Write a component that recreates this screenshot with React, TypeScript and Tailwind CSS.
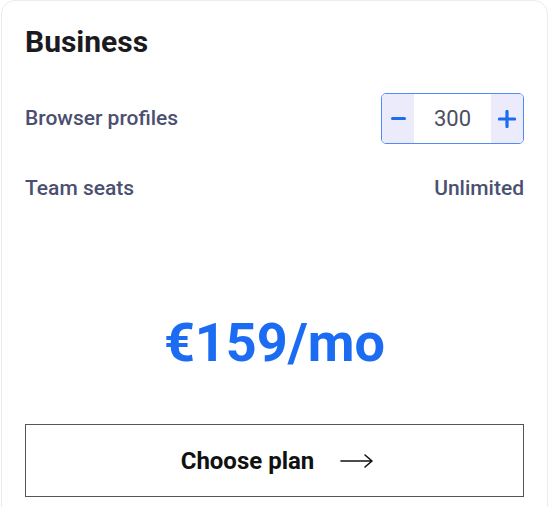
import { useState } from "react";

export default function App() {
  const [profiles, setProfiles] = useState(300);

  return (
    <div className="h-[507px] overflow-hidden bg-white pl-px pr-[4px] font-['Roboto',sans-serif]">
      <div className="h-[540px] w-[547px] rounded-t-[14px] border border-[#ececef] bg-white px-[23px] pt-[23px]">
        <h2 className="text-[30px] font-bold leading-[36px] text-[#1b1b1f]">Business</h2>

        <div className="mt-[33px] flex items-center justify-between">
          <span className="text-[21px] font-medium text-[#4b4f70]">Browser profiles</span>
          <div className="flex h-[51px] w-[143px] overflow-hidden rounded-[5px] border border-[#4f8df5]">
            <button
              className="flex w-[32px] items-center justify-center bg-[#ebebfb]"
              onClick={() => setProfiles((p) => Math.max(0, p - 10))}
            >
              <span className="block h-[3px] w-[15px] rounded-sm bg-[#1c6cf0]" />
            </button>
            <div className="flex flex-1 items-center justify-center text-[22px] text-[#4b4f60]">
              {profiles}
            </div>
            <button
              className="flex w-[32px] items-center justify-center bg-[#ebebfb]"
              onClick={() => setProfiles((p) => p + 10)}
            >
              <svg width="18" height="18" viewBox="0 0 18 18">
                <path d="M9 1.5v15M1.5 9h15" stroke="#1c6cf0" strokeWidth="3.2" strokeLinecap="round" />
              </svg>
            </button>
          </div>
        </div>

        <div className="mt-[31px] flex items-center justify-between text-[21px] font-medium leading-[26px] text-[#4b4f70]">
          <span>Team seats</span>
          <span>Unlimited</span>
        </div>

        <div className="mt-[115px] text-center text-[54px] font-bold leading-[54px] text-[#1b6cf2]">
          €159/mo
        </div>

        <button className="mt-[54px] flex h-[73px] w-full items-center justify-center gap-[26px] border border-[#555] bg-white pl-[6px]">
          <span className="text-[24px] font-bold text-[#111]">Choose plan</span>
          <svg width="34" height="16" viewBox="0 0 34 16" fill="none">
            <path d="M1 8h31M25 2l7 6-7 6" stroke="#111" strokeWidth="1.6" strokeLinecap="round" strokeLinejoin="round" />
          </svg>
        </button>
      </div>
    </div>
  );
}
